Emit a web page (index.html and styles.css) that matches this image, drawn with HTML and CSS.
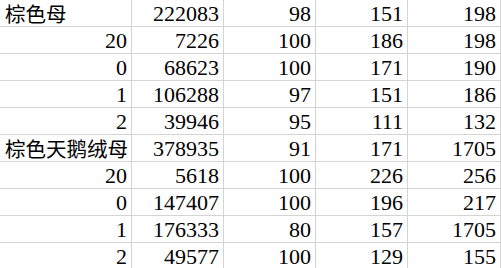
FILE: index.html
```html
<!DOCTYPE html>
<html>
<head>
<meta charset="utf-8">
<link rel="stylesheet" href="styles.css">
</head>
<body>
<div class="sheet">
  <div class="cell txt">棕色母</div><div class="cell">222083</div><div class="cell">98</div><div class="cell">151</div><div class="cell">198</div>
  <div class="cell">20</div><div class="cell">7226</div><div class="cell">100</div><div class="cell">186</div><div class="cell">198</div>
  <div class="cell">0</div><div class="cell">68623</div><div class="cell">100</div><div class="cell">171</div><div class="cell">190</div>
  <div class="cell">1</div><div class="cell">106288</div><div class="cell">97</div><div class="cell">151</div><div class="cell">186</div>
  <div class="cell">2</div><div class="cell">39946</div><div class="cell">95</div><div class="cell">111</div><div class="cell">132</div>
  <div class="cell txt">棕色天鹅绒母</div><div class="cell">378935</div><div class="cell">91</div><div class="cell">171</div><div class="cell">1705</div>
  <div class="cell">20</div><div class="cell">5618</div><div class="cell">100</div><div class="cell">226</div><div class="cell">256</div>
  <div class="cell">0</div><div class="cell">147407</div><div class="cell">100</div><div class="cell">196</div><div class="cell">217</div>
  <div class="cell">1</div><div class="cell">176333</div><div class="cell">80</div><div class="cell">157</div><div class="cell">1705</div>
  <div class="cell">2</div><div class="cell">49577</div><div class="cell">100</div><div class="cell">129</div><div class="cell">155</div>
</div>
</body>
</html>
```
FILE: styles.css
```css
html, body {
  margin: 0;
  padding: 0;
  background: #ffffff;
}
.sheet {
  display: grid;
  grid-template-columns: 132px 92px 92px 92px 93px;
  grid-auto-rows: 27px;
  width: 501px;
}
.cell {
  box-sizing: border-box;
  border-right: 1px solid #d4d4d4;
  border-bottom: 1px solid #d4d4d4;
  font-family: "Liberation Serif", "Times New Roman", serif;
  font-size: 22px;
  line-height: 26px;
  color: #000000;
  text-align: right;
  padding-right: 4px;
  padding-top: 1px;
  white-space: nowrap;
}
.cell.txt {
  font-family: "Noto Sans CJK SC", sans-serif;
  font-size: 20.5px;
  text-align: left;
  padding-left: 5px;
  padding-right: 0;
  padding-top: 0;
}
```
